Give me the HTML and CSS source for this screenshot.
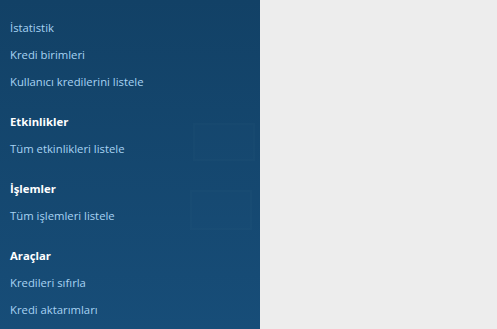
FILE: index.html
```html
<html>
<head>
    <title>Menü</title>
    <link rel="stylesheet" href="styles.css">
</head>
<body>
    <div id="sidebar">
        <div class="section">
            <a href="#">İstatistik</a>
            <a href="#">Kredi birimleri</a>
            <a href="#">Kullanıcı kredilerini listele</a>
        </div>
        <div class="section">
            <h3>Etkinlikler</h3>
            <a href="#">Tüm etkinlikleri listele</a>
        </div>
        <div class="section">
            <h3>İşlemler</h3>
            <a href="#">Tüm işlemleri listele</a>
        </div>
        <div class="section">
            <h3>Araçlar</h3>
            <a href="#">Kredileri sıfırla</a>
            <a href="#">Kredi aktarımları</a>
        </div>
        <div class="ghost ghost-one"></div>
        <div class="ghost ghost-two"></div>
    </div>
    <div id="content"></div>
</body>
</html>
```
FILE: styles.css
```css
body {
    margin: 0;
    font-family: "Open Sans", sans-serif;
    font-size: 11.3px;
    display: flex;
    height: 100vh;
    overflow: hidden;
    background-color: #ededed;
}
#sidebar {
    position: relative;
    width: 260px;
    flex-shrink: 0;
    background: linear-gradient(#124166, #174d78);
    padding: 14px 10px 0 10px;
    box-sizing: border-box;
}
#content {
    flex: 1;
    background-color: #ededed;
}
.section {
    display: flex;
    flex-direction: column;
    margin-bottom: 14px;
}
.section a {
    color: #a8d3f3;
    text-decoration: none;
    line-height: 27px;
}
.section h3 {
    color: #ffffff;
    font-size: 11.3px;
    font-weight: bold;
    margin: 0;
    line-height: 26px;
}
.ghost {
    position: absolute;
    border: 2px solid rgba(255, 255, 255, 0.012);
    background-color: rgba(255, 255, 255, 0.006);
}
.ghost-one {
    left: 193px;
    top: 123px;
    width: 58px;
    height: 34px;
}
.ghost-two {
    left: 190px;
    top: 190px;
    width: 58px;
    height: 36px;
}
```
